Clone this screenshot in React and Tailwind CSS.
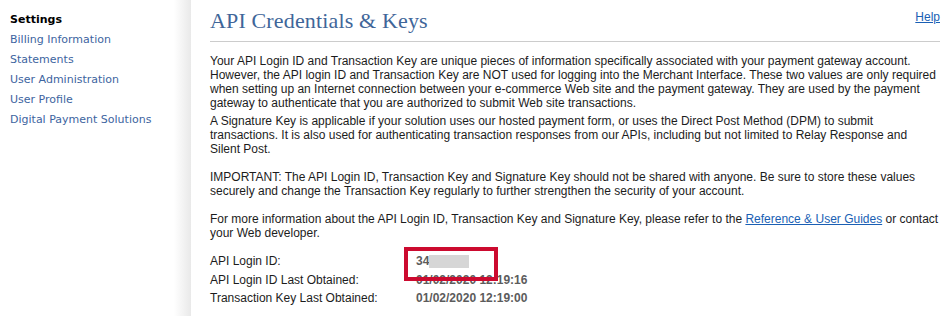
import React from "react";

const NAV = [
  "Billing Information",
  "Statements",
  "User Administration",
  "User Profile",
  "Digital Payment Solutions",
];

const Sidebar = () => (
  <aside className="w-[191px] shrink-0 bg-linear-to-r from-white from-[91%] to-[#e9e9e9] pt-[10px] pl-[10px] font-['DejaVu_Sans',Verdana,sans-serif] text-[11px] leading-[20px]">
    <div className="font-bold text-black">Settings</div>
    {NAV.map((item) => (
      <div key={item} className="text-[#3d64a0]">
        {item}
      </div>
    ))}
  </aside>
);

const InfoRow = ({ label, value, masked }) => (
  <div className="flex leading-[18.5px]">
    <div className="w-[206px] shrink-0">{label}</div>
    <div className="font-bold text-[#5c5c5c] flex items-center">
      {value}
      {masked && <span className="inline-block w-[40px] h-[13px] bg-[#d6d6d6]" />}
    </div>
  </div>
);

export default function App() {
  return (
    <div className="flex w-[950px] h-[316px] bg-white overflow-hidden">
      <Sidebar />
      <main className="flex-1 pl-[19px] pr-[10px] font-['Liberation_Sans',Arial,sans-serif] text-[12px] text-[#1c1c1c]">
        <div className="flex items-end justify-between h-[42px] border-b border-[#cccccc] pb-[7px]">
          <h1 className="font-['Liberation_Serif',Georgia,serif] text-[22px] tracking-[0.15px] leading-[26px] text-[#3f6699]">
            API Credentials &amp; Keys
          </h1>
          <a href="#" className="self-start mt-[8px] text-[#1a5fb4] underline">
            Help
          </a>
        </div>

        <div className="pt-[12px] leading-[14px]">
          <p>
            Your API Login ID and Transaction Key are unique pieces of information specifically associated with your payment gateway account. However, the API login ID and Transaction Key are NOT used for logging into the Merchant Interface. These two values are only required when setting up an Internet connection between your e-commerce Web site and the payment gateway. They are used by the payment gateway to authenticate that you are authorized to submit Web site transactions.
          </p>
          <p className="mt-[4px]">
            A Signature Key is applicable if your solution uses our hosted payment form, or uses the Direct Post Method (DPM) to submit transactions. It is also used for authenticating transaction responses from our APIs, including but not limited to Relay Response and Silent Post.
          </p>
          <p className="mt-[14px]">
            IMPORTANT: The API Login ID, Transaction Key and Signature Key should not be shared with anyone. Be sure to store these values securely and change the Transaction Key regularly to further strengthen the security of your account.
          </p>
          <p className="mt-[14px]">
            For more information about the API Login ID, Transaction Key and Signature Key, please refer to the{" "}
            <a href="#" className="text-[#1a5fb4] underline">Reference &amp; User Guides</a> or contact your Web developer.
          </p>
        </div>

        <div className="relative mt-[12px]">
          <InfoRow label="API Login ID:" value="34" masked />
          <InfoRow label="API Login ID Last Obtained:" value="01/02/2020 12:19:16" />
          <InfoRow label="Transaction Key Last Obtained:" value="01/02/2020 12:19:00" />
          <div className="absolute left-[194px] top-[-5px] w-[94px] h-[34px] border-[4px] border-[#cc0a2f]" />
        </div>
      </main>
    </div>
  );
}
